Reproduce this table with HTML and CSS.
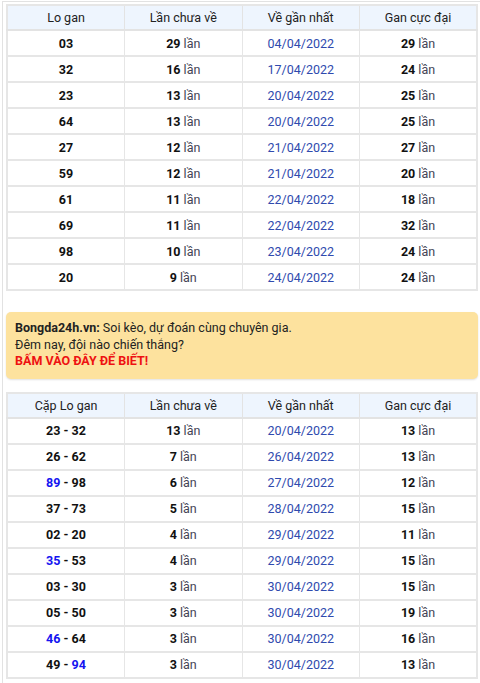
FILE: index.html
```html
<!DOCTYPE html>
<html lang="vi">
<head>
<meta charset="utf-8">
<link rel="stylesheet" href="styles.css">
</head>
<body>
<div class="wrap">
<table class="tbl">
<thead><tr><th>Lo gan</th><th>Lần chưa về</th><th>Về gần nhất</th><th>Gan cực đại</th></tr></thead>
<tbody>
<tr><td class="num">03</td><td><b>29</b> lần</td><td class="date">04/04/2022</td><td><b>29</b> lần</td></tr>
<tr><td class="num">32</td><td><b>16</b> lần</td><td class="date">17/04/2022</td><td><b>24</b> lần</td></tr>
<tr><td class="num">23</td><td><b>13</b> lần</td><td class="date">20/04/2022</td><td><b>25</b> lần</td></tr>
<tr><td class="num">64</td><td><b>13</b> lần</td><td class="date">20/04/2022</td><td><b>25</b> lần</td></tr>
<tr><td class="num">27</td><td><b>12</b> lần</td><td class="date">21/04/2022</td><td><b>27</b> lần</td></tr>
<tr><td class="num">59</td><td><b>12</b> lần</td><td class="date">21/04/2022</td><td><b>20</b> lần</td></tr>
<tr><td class="num">61</td><td><b>11</b> lần</td><td class="date">22/04/2022</td><td><b>18</b> lần</td></tr>
<tr><td class="num">69</td><td><b>11</b> lần</td><td class="date">22/04/2022</td><td><b>32</b> lần</td></tr>
<tr><td class="num">98</td><td><b>10</b> lần</td><td class="date">23/04/2022</td><td><b>24</b> lần</td></tr>
<tr><td class="num">20</td><td><b>9</b> lần</td><td class="date">24/04/2022</td><td><b>24</b> lần</td></tr>
</tbody>
</table>

<div class="promo">
<div><b class="brand">Bongda24h.vn:</b> Soi kèo, dự đoán cùng chuyên gia.</div>
<div>Đêm nay, đội nào chiến thắng?</div>
<div class="cta">BẤM VÀO ĐÂY ĐỂ BIẾT!</div>
</div>

<table class="tbl">
<thead><tr><th>Cặp Lo gan</th><th>Lần chưa về</th><th>Về gần nhất</th><th>Gan cực đại</th></tr></thead>
<tbody>
<tr><td class="num">23 - 32</td><td><b>13</b> lần</td><td class="date">20/04/2022</td><td><b>13</b> lần</td></tr>
<tr><td class="num">26 - 62</td><td><b>7</b> lần</td><td class="date">26/04/2022</td><td><b>13</b> lần</td></tr>
<tr><td class="num"><span class="hl">89</span> - 98</td><td><b>6</b> lần</td><td class="date">27/04/2022</td><td><b>12</b> lần</td></tr>
<tr><td class="num">37 - 73</td><td><b>5</b> lần</td><td class="date">28/04/2022</td><td><b>15</b> lần</td></tr>
<tr><td class="num">02 - 20</td><td><b>4</b> lần</td><td class="date">29/04/2022</td><td><b>11</b> lần</td></tr>
<tr><td class="num"><span class="hl">35</span> - 53</td><td><b>4</b> lần</td><td class="date">29/04/2022</td><td><b>15</b> lần</td></tr>
<tr><td class="num">03 - 30</td><td><b>3</b> lần</td><td class="date">30/04/2022</td><td><b>15</b> lần</td></tr>
<tr><td class="num">05 - 50</td><td><b>3</b> lần</td><td class="date">30/04/2022</td><td><b>19</b> lần</td></tr>
<tr><td class="num"><span class="hl">46</span> - 64</td><td><b>3</b> lần</td><td class="date">30/04/2022</td><td><b>16</b> lần</td></tr>
<tr><td class="num">49 - <span class="hl">94</span></td><td><b>3</b> lần</td><td class="date">30/04/2022</td><td><b>13</b> lần</td></tr>
</tbody>
</table>
</div>
</body>
</html>
```
FILE: styles.css
```css
html, body {
  margin: 0;
  padding: 0;
  background: #fff;
}
body {
  font-family: Roboto, "Noto Sans", Arial, sans-serif;
  color: #222;
  font-size: 12.5px;
}
.wrap {
  margin: 1px 0 0 2px;
  border: 1px solid #e2e2e2;
  border-right: none;
  padding: 2px 1px 10px 3px;
}
.tbl {
  width: 472px;
  border-collapse: collapse;
  table-layout: fixed;
  border: 2px solid #e6e6e6;
}
.tbl th {
  background: #eef5fe;
  font-weight: normal;
  font-size: 12.5px;
  color: #222;
  height: 23px;
  padding: 0;
  border: 1px solid #e3e3e3;
  border-bottom: 2px solid #e3e3e3;
  text-align: center;
}
.tbl td {
  height: 24px;
  padding: 0;
  border: 1px solid #e6e6e6;
  border-top-width: 2px;
  text-align: center;
  color: #445;
  font-size: 12.5px;
}
.tbl td b {
  color: #111;
  font-weight: bold;
}
.tbl td.num {
  font-weight: bold;
  color: #111;
}
.tbl td.date {
  color: #2f4aae;
}
.hl {
  color: #1414f0;
}
.promo {
  margin: 21px 0 13px 0;
  width: 454px;
  background: #fde29e;
  border-radius: 5px;
  padding: 8px 9px 9px 9px;
  line-height: 16.5px;
  color: #222;
  font-size: 12.5px;
  box-shadow: 0 1px 2px rgba(0,0,0,0.12);
}
.brand {
  font-weight: bold;
  color: #222;
}
.cta {
  color: #ee1111;
  font-weight: bold;
}
```
